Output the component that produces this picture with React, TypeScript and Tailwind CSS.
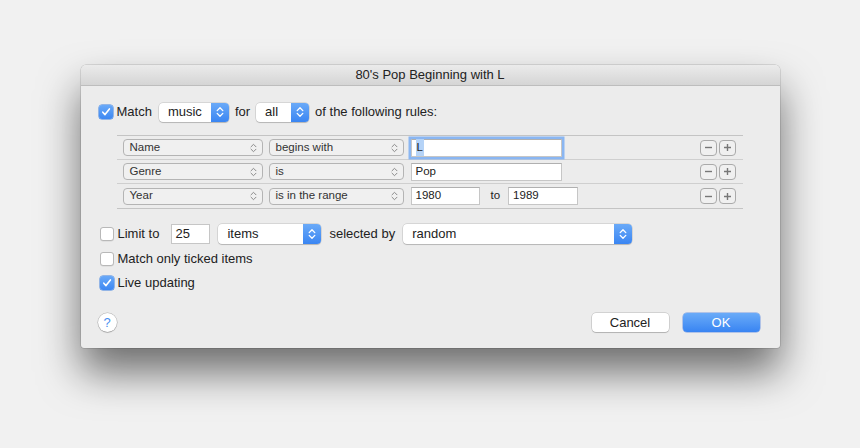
import React from "react";

const font = { fontFamily: '"Liberation Sans", Arial, sans-serif' };

function Check({ checked }: { checked?: boolean }) {
  if (checked) {
    return (
      <div className="w-[14px] h-[14px] rounded-[3px] bg-gradient-to-b from-[#69a9f8] to-[#3c87f2] flex items-center justify-center shadow-[0_0_0_0.5px_#3a7fe0]">
        <svg width="10" height="10" viewBox="0 0 10 10">
          <path d="M1.8 5.2 L4 7.6 L8.4 1.9" fill="none" stroke="white" strokeWidth="1.6" strokeLinecap="round" strokeLinejoin="round" />
        </svg>
      </div>
    );
  }
  return <div className="w-[14px] h-[14px] rounded-[3px] bg-white border border-[#b8b8b8] shadow-[0_0.5px_0.5px_rgba(0,0,0,0.1)]" />;
}

function BlueChevrons() {
  return (
    <svg width="8" height="12" viewBox="0 0 8 12">
      <path d="M1.2 4.6 L4 1.8 L6.8 4.6" fill="none" stroke="white" strokeWidth="1.3" strokeLinecap="round" strokeLinejoin="round" />
      <path d="M1.2 7.4 L4 10.2 L6.8 7.4" fill="none" stroke="white" strokeWidth="1.3" strokeLinecap="round" strokeLinejoin="round" />
    </svg>
  );
}

function GrayChevrons() {
  return (
    <svg width="7" height="10" viewBox="0 0 7 10">
      <path d="M1 3.8 L3.5 1.3 L6 3.8" fill="none" stroke="#8a8a8a" strokeWidth="1" strokeLinecap="round" strokeLinejoin="round" />
      <path d="M1 6.2 L3.5 8.7 L6 6.2" fill="none" stroke="#8a8a8a" strokeWidth="1" strokeLinecap="round" strokeLinejoin="round" />
    </svg>
  );
}

function BigPopup({ label, w, h }: { label: string; w: string; h: string }) {
  return (
    <div className={`${w} ${h} flex rounded-[4px] bg-white shadow-[0_0_0_0.5px_rgba(0,0,0,0.18),0_1px_1px_rgba(0,0,0,0.15)]`}>
      <div className="flex-1 flex items-center pl-[9px] text-[13px] text-[#222]">{label}</div>
      <div className="w-[18px] rounded-r-[4px] bg-gradient-to-b from-[#6aaaf8] to-[#3a85f2] flex items-center justify-center">
        <BlueChevrons />
      </div>
    </div>
  );
}

function RulePopup({ label, w }: { label: string; w: string }) {
  return (
    <div className={`${w} h-[17px] flex items-center justify-between rounded-[4px] border border-[#b4b4b4] bg-[#f0f0f0] pl-[6px] pr-[5px] text-[11.5px] text-[#333]`}>
      <span>{label}</span>
      <GrayChevrons />
    </div>
  );
}

function Field({ value, w, focused, selected }: { value: string; w: string; focused?: boolean; selected?: boolean }) {
  return (
    <div
      className={`${w} h-[18px] flex items-center bg-white border border-[#c6c6c6] border-t-[#b0b0b0] pl-[4px] text-[11.5px] text-[#222] ${
        focused ? "shadow-[0_0_0_2.5px_#8ab6f2] border-[#7aa7e8]" : ""
      }`}
    >
      {selected ? <span className="bg-[#b5d3f7] px-[1px]">{value}</span> : <span>{value}</span>}
    </div>
  );
}

function PlusMinus() {
  return (
    <div className="flex gap-[2px]">
      <div className="w-[17px] h-[16px] rounded-[4px] border border-[#aaa] bg-[#f0f0f0] flex items-center justify-center">
        <svg width="9" height="9" viewBox="0 0 9 9">
          <path d="M1 4.5 H8" stroke="#777" strokeWidth="1.4" />
        </svg>
      </div>
      <div className="w-[17px] h-[16px] rounded-[4px] border border-[#aaa] bg-[#f0f0f0] flex items-center justify-center">
        <svg width="9" height="9" viewBox="0 0 9 9">
          <path d="M1 4.5 H8 M4.5 1 V8" stroke="#777" strokeWidth="1.4" />
        </svg>
      </div>
    </div>
  );
}

function RuleRow({ a, b, children, last }: { a: string; b: string; children: React.ReactNode; last?: boolean }) {
  return (
    <div className={`h-[24px] flex items-center pl-[6px] pr-[7px] ${last ? "" : "border-b border-[#cfcfcf]"}`}>
      <RulePopup label={a} w="w-[140px]" />
      <div className="w-[6px]" />
      <RulePopup label={b} w="w-[135px]" />
      <div className="w-[7px]" />
      <div className="flex-1 flex items-center">{children}</div>
      <PlusMinus />
    </div>
  );
}

export default function App() {
  return (
    <div className="w-[860px] h-[448px] bg-[#f1f1f1] overflow-hidden" style={font}>
      <div className="pt-[65px] flex justify-center">
        <div className="w-[699px] h-[283px] bg-[#ececec] rounded-t-[5px] rounded-b-[3px] shadow-[0_0_0_0.5px_rgba(0,0,0,0.2),0_24px_42px_rgba(0,0,0,0.55)] flex flex-col">
          <div className="h-[21px] rounded-t-[5px] bg-gradient-to-b from-[#ebebeb] to-[#d5d5d5] border-b border-[#bdbdbd] flex items-center justify-center text-[13px] text-[#222]">
            80's Pop Beginning with L
          </div>
          <div className="flex-1 flex flex-col pl-[18px] pr-[19px]">
            <div className="mt-[16px] h-[20px] flex items-center text-[13px] text-[#222]">
              <Check checked />
              <span className="ml-[4px]">Match</span>
              <div className="ml-[7px]">
                <BigPopup label="music" w="w-[70px]" h="h-[19px]" />
              </div>
              <span className="ml-[6px]">for</span>
              <div className="ml-[6px]">
                <BigPopup label="all" w="w-[53px]" h="h-[19px]" />
              </div>
              <span className="ml-[6px]">of the following rules:</span>
            </div>

            <div className="mt-[13px] ml-[18px] w-[626px] border-t border-b border-[#c4c4c4]">
              <RuleRow a="Name" b="begins with">
                <Field value="L" w="w-[151px]" focused selected />
              </RuleRow>
              <RuleRow a="Genre" b="is">
                <Field value="Pop" w="w-[151px]" />
              </RuleRow>
              <RuleRow a="Year" b="is in the range" last>
                <Field value="1980" w="w-[69px]" />
                <span className="ml-[11px] mr-[8px] text-[11.5px] text-[#222]">to</span>
                <Field value="1989" w="w-[70px]" />
              </RuleRow>
            </div>

            <div className="mt-[15px] h-[20px] flex items-center text-[13px] text-[#222]">
              <div className="ml-[1px]">
                <Check />
              </div>
              <span className="ml-[4px]">Limit to</span>
              <div className="ml-[12px] w-[39px] h-[20px] bg-white border border-[#c6c6c6] flex items-center pl-[3px] text-[13px]">25</div>
              <div className="ml-[8px]">
                <BigPopup label="items" w="w-[103px]" h="h-[20px]" />
              </div>
              <span className="ml-[8px]">selected by</span>
              <div className="ml-[8px]">
                <BigPopup label="random" w="w-[229px]" h="h-[20px]" />
              </div>
            </div>

            <div className="mt-[5px] h-[20px] flex items-center text-[13px] text-[#222]">
              <div className="ml-[1px]">
                <Check />
              </div>
              <span className="ml-[4px]">Match only ticked items</span>
            </div>

            <div className="mt-[4px] h-[20px] flex items-center text-[13px] text-[#222]">
              <div className="ml-[1px]">
                <Check checked />
              </div>
              <span className="ml-[4px]">Live updating</span>
            </div>

            <div className="mt-[20px] h-[19px] flex items-center">
              <div className="ml-[-1px] w-[19px] h-[19px] rounded-full bg-white shadow-[0_0_0_0.5px_rgba(0,0,0,0.25),0_1px_1px_rgba(0,0,0,0.15)] flex items-center justify-center text-[13px] text-[#4a8ff0]">
                ?
              </div>
              <div className="flex-1" />
              <div className="w-[77px] h-[19px] rounded-[4px] bg-white shadow-[0_0_0_0.5px_rgba(0,0,0,0.22),0_1px_1px_rgba(0,0,0,0.15)] flex items-center justify-center text-[13px] text-[#222]">
                Cancel
              </div>
              <div className="ml-[14px] mr-[1px] w-[77px] h-[19px] rounded-[4px] bg-gradient-to-b from-[#6aabf8] to-[#3884f2] shadow-[0_0_0_0.5px_rgba(40,100,220,0.6)] flex items-center justify-center text-[13px] text-white">
                OK
              </div>
            </div>
          </div>
        </div>
      </div>
    </div>
  );
}
